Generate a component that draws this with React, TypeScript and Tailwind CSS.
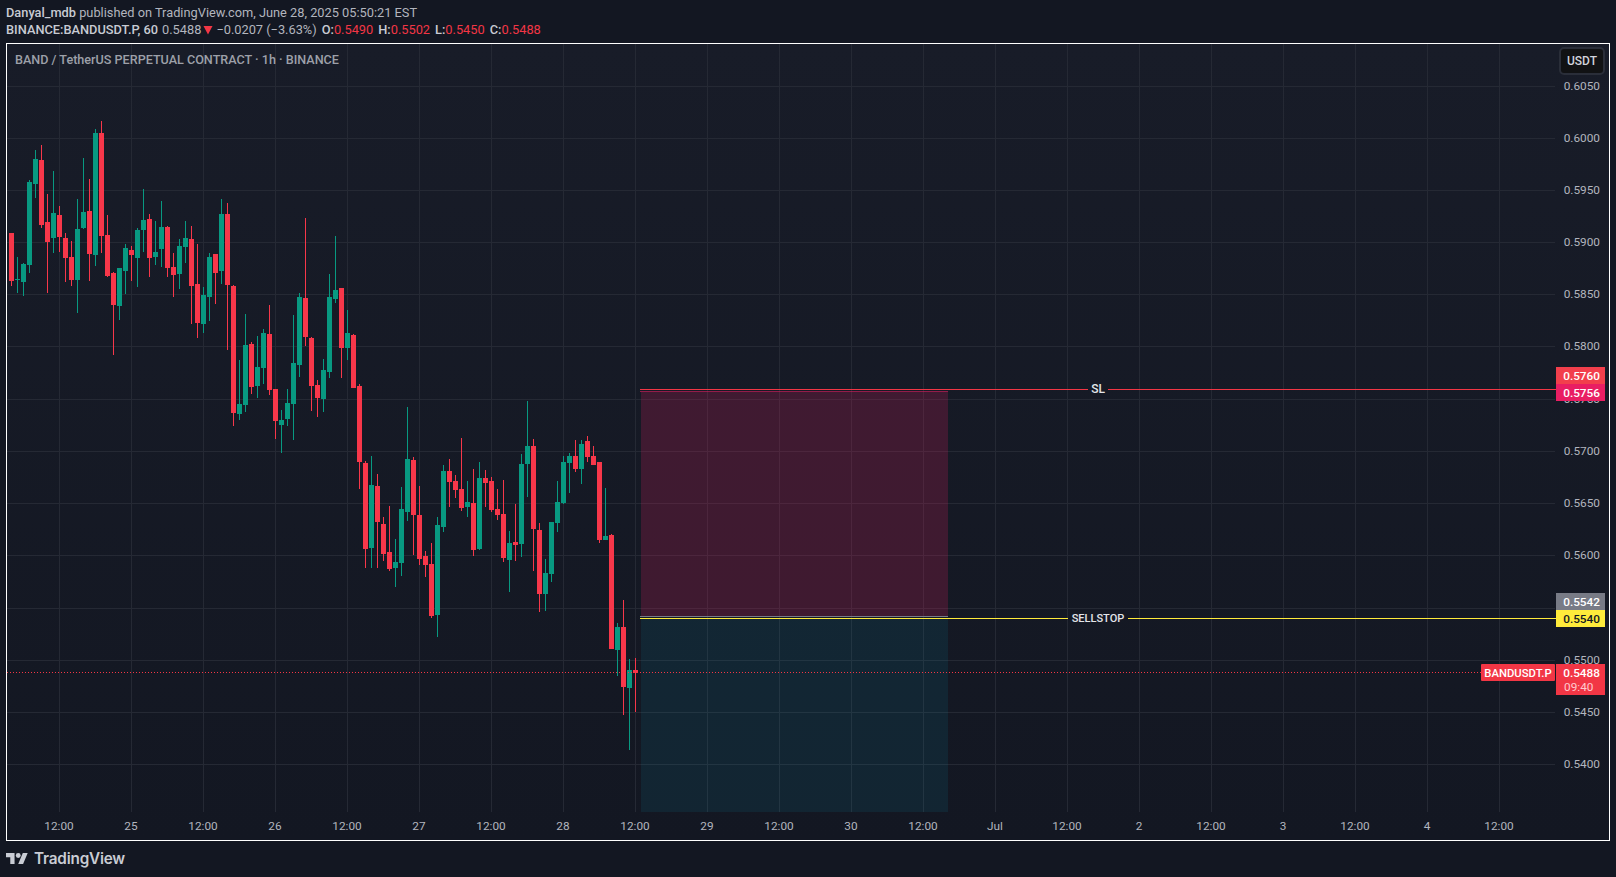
import React from "react";

type C = [string, number, number, number, number];

const zoneA: C[] = [
  ["R", 399, 399, 543, 558], ["G", 471, 538, 541, 579], ["G", 489, 492, 546, 588], ["G", 240, 246, 495, 519],
  ["G", 150, 177, 252, 294], ["R", 135, 180, 375, 384], ["R", 282, 366, 426, 579], ["G", 213, 339, 414, 459],
  ["R", 318, 345, 411, 456], ["R", 399, 414, 474, 546], ["R", 423, 471, 540, 558], ["G", 297, 387, 540, 639],
  ["G", 174, 336, 384, 387], ["R", 237, 333, 462, 543], ["G", 87, 99, 465, 498], ["R", 63, 99, 408, 459],
  ["R", 345, 405, 528, 531], ["R", 516, 519, 615, 765], ["G", 504, 504, 618, 660], ["G", 432, 444, 513, 582],
  ["R", 438, 450, 465, 543], ["G", 384, 390, 474, 561], ["G", 267, 360, 390, 456], ["R", 342, 357, 474, 531],
  ["G", 363, 456, 471, 495], ["G", 303, 381, 447, 501], ["R", 378, 381, 504, 531],
];
const zoneB: C[] = [
  ["R", 219, 261, 285, 351], ["G", 177, 198, 282, 327], ["G", 123, 174, 201, 249], ["R", 138, 177, 318, 432],
  ["R", 192, 312, 429, 474], ["G", 321, 345, 432, 459], ["G", 219, 231, 351, 423], ["R", 222, 222, 279, 372],
  ["G", 57, 102, 273, 312], ["R", 69, 102, 315, 510], ["R", 315, 318, 699, 738], ["G", 540, 672, 702, 720],
  ["G", 402, 495, 675, 696], ["R", 486, 492, 621, 642], ["G", 468, 561, 618, 654], ["G", 447, 459, 564, 612],
  ["R", 375, 462, 630, 645], ["R", 627, 627, 723, 777], ["G", 690, 720, 735, 819], ["G", 627, 669, 717, 738],
  ["G", 405, 549, 672, 780], ["G", 339, 351, 555, 591], ["R", 114, 354, 471, 498], ["R", 471, 474, 618, 693],
  ["R", 600, 615, 654, 711], ["G", 537, 570, 657, 696], ["G", 282, 351, 576, 594], ["G", 168, 330, 357, 369],
  ["R", 324, 324, 504, 594], ["G", 390, 459, 504, 540],
];
const zoneC: C[] = [
  ["R", -138, -135, 24, 24], ["R", 12, 18, 246, 327], ["R", 243, 249, 507, 564], ["G", 228, 315, 504, 564],
  ["R", 282, 318, 426, 564], ["R", 411, 432, 522, 543], ["R", 378, 516, 567, 573], ["G", 477, 546, 564, 621],
  ["G", 321, 387, 549, 588], ["G", 81, 237, 396, 423], ["R", 231, 240, 405, 525], ["R", 318, 405, 537, 555],
  ["R", 513, 528, 555, 591], ["R", 489, 552, 708, 714], ["G", 411, 435, 705, 771], ["G", 255, 273, 441, 456],
  ["R", 237, 273, 306, 381], ["R", 285, 303, 330, 354], ["R", 174, 327, 384, 393], ["G", 303, 366, 381, 411],
  ["R", 267, 369, 510, 528], ["G", 246, 294, 507, 510], ["R", 270, 294, 309, 381], ["R", 291, 303, 390, 396],
  ["R", 327, 387, 405, 420], ["R", 300, 402, 534, 546], ["G", 453, 489, 540, 636], ["R", 372, 486, 495, 543],
  ["G", 222, 252, 492, 531], ["G", 63, 198, 252, 351], ["R", 177, 198, 447, 573], ["R", 429, 450, 642, 696],
  ["G", 537, 579, 642, 693], ["G", 426, 426, 582, 606], ["G", 303, 366, 429, 456], ["G", 228, 246, 369, 372],
  ["G", 219, 228, 249, 339], ["R", 180, 228, 267, 276], ["G", 180, 192, 267, 312], ["R", 168, 183, 231, 246],
  ["R", 198, 228, 255, 255], ["R", 246, 246, 480, 489], ["G", 324, 468, 480, 480], ["R", 462, 465, 807, 807],
];
const zoneD: C[] = [
  ["G", 99, 111, 180, 258], ["R", 30, 111, 291, 375], ["G", 207, 240, 294, 480], ["R", 204, 240, 249, 366],
];

const candles = [
  ...zoneA.map((c) => [c[0], ...c.slice(1).map((v) => 100 + (v as number) / 3)]),
  ...zoneB.map((c) => [c[0], ...c.slice(1).map((v) => 180 + (v as number) / 3)]),
  ...zoneC.map((c) => [c[0], ...c.slice(1).map((v) => 380 + (v as number) / 3)]),
  ...zoneD.map((c) => [c[0], ...c.slice(1).map((v) => 590 + (v as number) / 3)]),
] as C[];

const prices = ["0.6050","0.6000","0.5950","0.5900","0.5850","0.5800","0.5750","0.5700","0.5650","0.5600","","0.5500","0.5450","0.5400"];
const times = ["12:00","25","12:00","26","12:00","27","12:00","28","12:00","29","12:00","30","12:00","Jul","12:00","2","12:00","3","12:00","4","12:00"];
const gridY = [86,138,190,242,294,346,399,451,503,555,608,660,712,764];

const RED = "#f7374a";
const GREEN = "#089981";

function PriceTag({ y, h, fill, text, color = "#ffffff" }: { y: number; h: number; fill: string; text: string; color?: string }) {
  return (
    <g>
      <rect x={1556} y={y} width={49} height={h} fill={fill} />
      <text x={1600} y={y + 13} textAnchor="end" fill={color} className="text-[11.8px] font-medium">{text}</text>
    </g>
  );
}

export default function App() {
  return (
    <div className="flex h-[877px] w-[1616px] flex-col overflow-hidden bg-[#131722] font-['Roboto','Noto_Sans',sans-serif] text-[12.8px] text-[#b2b5be]">
      <header className="flex h-[43px] flex-col px-[6px] pt-[4px] leading-[17px]">
        <div className="whitespace-pre">
          <span className="font-medium text-[#c8cbd3]">Danyal_mdb</span> published on TradingView.com, June 28, 2025 05:50:21 EST
        </div>
        <div className="flex items-center whitespace-pre">
          <span className="mr-[4px] font-medium text-[#c8cbd3]">BINANCE:BANDUSDT.P, 60</span>
          <span>0.5488</span>
          <svg width={10} height={10} viewBox="0 0 10 10" className="mx-[2px]" aria-hidden="true">
            <path d="M0.5 1h9L5 9.5z" fill="#f23645" />
          </svg>
          <span className="ml-[1px] mr-[5px]">−0.0207 (−3.63%)</span>
          <span className="mr-[5px] font-medium text-[#c8cbd3]">O:<span className="font-normal text-[#f23645]">0.5490</span></span>
          <span className="mr-[5px] font-medium text-[#c8cbd3]">H:<span className="font-normal text-[#f23645]">0.5502</span></span>
          <span className="mr-[5px] font-medium text-[#c8cbd3]">L:<span className="font-normal text-[#f23645]">0.5450</span></span>
          <span className="font-medium text-[#c8cbd3]">C:<span className="font-normal text-[#f23645]">0.5488</span></span>
        </div>
      </header>

      <main className="relative mx-[6px] h-[798px] w-[1604px] border border-white bg-linear-to-b from-[#181c28] to-[#131722]">
        <svg width={1602} height={796} viewBox="7 44 1602 796" className="block">
          {gridY.map((y) => (
            <line key={y} x1={7} x2={1555} y1={y + 0.5} y2={y + 0.5} stroke="#252934" shapeRendering="crispEdges" />
          ))}
          {times.map((_, i) => (
            <line key={i} x1={59.5 + 72 * i} x2={59.5 + 72 * i} y1={44} y2={812} stroke="#252934" shapeRendering="crispEdges" />
          ))}

          <rect x={641} y={392} width={307} height={224} fill="#e91e63" fillOpacity={0.2} />
          <rect x={641} y={618} width={307} height={194} fill="#08a6c0" fillOpacity={0.1} />

          <g shapeRendering="crispEdges">
            {candles.map((c, i) => {
              const x = 9 + 6 * i;
              const col = c[0] === "R" ? RED : GREEN;
              const top = Math.round(c[2]);
              const bot = Math.round(c[3]);
              return (
                <g key={i}>
                  <rect x={x + 2} y={Math.round(c[1])} width={1} height={Math.max(1, Math.round(c[4]) - Math.round(c[1]))} fill={col} />
                  <rect x={x} y={top} width={5} height={Math.max(1, bot - top)} fill={col} />
                </g>
              );
            })}
          </g>

          <line x1={7} x2={1481} y1={672.5} y2={672.5} stroke="#f23645" strokeDasharray="1 2" shapeRendering="crispEdges" />

          <g shapeRendering="crispEdges">
            <line x1={640} x2={948} y1={391.5} y2={391.5} stroke="#e91e63" strokeOpacity={0.6} />
            <line x1={640} x2={1088} y1={389.5} y2={389.5} stroke="#f23645" />
            <line x1={1108} x2={1556} y1={389.5} y2={389.5} stroke="#f23645" />
            <line x1={640} x2={948} y1={616.5} y2={616.5} stroke="#787b86" />
            <line x1={640} x2={1068} y1={618.5} y2={618.5} stroke="#ffeb3b" />
            <line x1={1128} x2={1556} y1={618.5} y2={618.5} stroke="#ffeb3b" />
          </g>
          <text x={1098} y={393} textAnchor="middle" fill="#e3e5ea" className="text-[12px] font-medium">SL</text>
          <text x={1098} y={622} textAnchor="middle" fill="#e3e5ea" className="text-[11px] font-medium">SELLSTOP</text>

          {prices.map((p, i) =>
            p ? (
              <text key={p} x={1600} y={gridY[i] + 4} textAnchor="end" fill="#b2b5be" className="text-[11.8px]">{p}</text>
            ) : null
          )}
          {times.map((t, i) => (
            <text key={i} x={59 + 72 * i} y={830} textAnchor="middle" fill="#b2b5be" className="text-[11.8px]">{t}</text>
          ))}

          <PriceTag y={367} h={17} fill="#f23f4c" text="0.5760" />
          <PriceTag y={384} h={17} fill="#e91e63" text="0.5756" />
          <PriceTag y={593} h={17} fill="#787b86" text="0.5542" />
          <PriceTag y={610} h={17} fill="#ffeb3b" text="0.5540" color="#131722" />

          <rect x={1481} y={664} width={74} height={17} rx={1} fill="#f23645" />
          <text x={1518} y={677} textAnchor="middle" fill="#ffffff" className="text-[11.3px] font-medium">BANDUSDT.P</text>
          <rect x={1556} y={664} width={49} height={31} fill="#f23645" />
          <text x={1600} y={677} textAnchor="end" fill="#ffffff" className="text-[11.8px] font-medium">0.5488</text>
          <text x={1593.5} y={691} textAnchor="end" fill="#ffc9cf" className="text-[11.8px]">09:40</text>
        </svg>

        <div className="absolute left-[8px] top-[7px] text-[12.6px] font-medium text-[#9da0a9]">
          BAND / TetherUS PERPETUAL CONTRACT · 1h · BINANCE
        </div>
        <div className="absolute left-[1552px] top-[3px] flex h-[28px] w-[46px] items-center justify-center rounded-[5px] border-2 border-[#2a2e39] bg-[#111214] text-[12px] font-medium text-[#d1d4dc]">
          USDT
        </div>
      </main>

      <footer className="flex items-center gap-[6px] pl-[6px] pt-[8px]">
        <svg width={22} height={11} viewBox="0 4 36 18" fill="#c9ccd4" aria-hidden="true" preserveAspectRatio="none" className="-translate-y-[1px]">
          <path d="M14 22H7V11H0V4h14v18zM28 22h-8l7.5-18h8L28 22z" />
          <circle cx="20" cy="8" r="4" />
        </svg>
        <span className="font-['Inter',sans-serif] text-[15.3px] font-semibold leading-[20px] tracking-[-0.2px] text-[#c9ccd4]">TradingView</span>
      </footer>
    </div>
  );
}
